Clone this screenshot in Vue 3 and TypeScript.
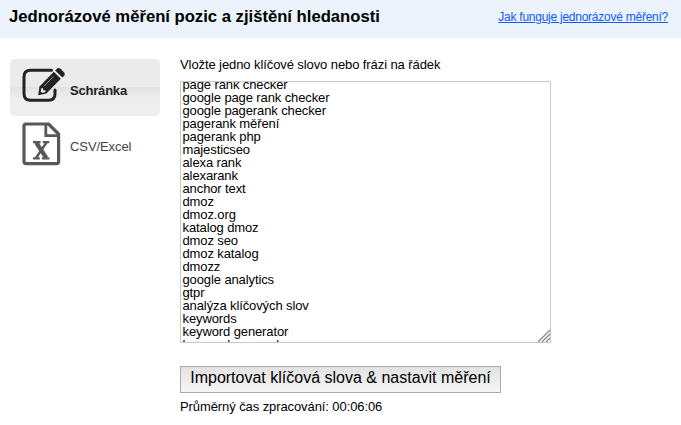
<script setup lang="ts">
const keywords: string[] = [
  'page rank checker',
  'google page rank checker',
  'google pagerank checker',
  'pagerank měření',
  'pagerank php',
  'majesticseo',
  'alexa rank',
  'alexarank',
  'anchor text',
  'dmoz',
  'dmoz.org',
  'katalog dmoz',
  'dmoz seo',
  'dmoz katalog',
  'dmozz',
  'google analytics',
  'gtpr',
  'analýza klíčových slov',
  'keywords',
  'keyword generator',
  'keyword research',
]
</script>

<template>
  <div class="page">
    <header class="header">
      <h1>Jednorázové měření pozic a zjištění hledanosti</h1>
      <a href="#">Jak funguje jednorázové měření?</a>
    </header>
    <div class="body">
      <nav class="tabs">
        <div class="tab active">
          <svg class="icon" width="47" height="40" viewBox="0 0 47 40">
            <path d="M29.5 4.2H8.5Q2 4.2 2 10.7V27.7Q2 34.2 8.5 34.2H26.5Q33 34.2 33 27.7V24" fill="none" stroke="#222" stroke-width="3" stroke-linecap="round" />
            <path d="M16.2 29.2L17.5 20.5L31.8 5.8L38.8 12.8L24.4 27.6Z" fill="#222" />
            <path d="M33.2 4.5L35.2 2.6Q36.8 1.3 38.5 2.8L42.2 6.5Q43.5 8.1 42.2 9.7L40.3 11.5Z" fill="#222" />
            <path d="M18.7 25.7L19.3 22.2L20.7 22L21.4 24.2L23.6 24.6L23.2 26.2L20.3 26.8Z" fill="#eee" />
            <path d="M22 20.2L31.5 10.4" stroke="#999" stroke-width="1" />
          </svg>
          <span>Schránka</span>
        </div>
        <div class="tab">
          <svg class="icon file" width="47" height="46" viewBox="0 0 47 46">
            <path d="M4.2 2H26.5L36.6 12V39.6Q36.6 41.6 34.6 41.6H4Q2 41.6 2 39.6V4Q2 2 4 2Z" fill="none" stroke="#585858" stroke-width="3.2" stroke-linejoin="round" />
            <path d="M23.8 2.5V13.6H36" fill="none" stroke="#585858" stroke-width="2.8" />
            <path d="M14.2 20.5L24.3 36" stroke="#585858" stroke-width="4.2" />
            <path d="M24.5 20.5L14 36" stroke="#585858" stroke-width="2.4" />
            <path d="M11 20.2H18.6M20.8 20.2H27.2M11 36.3H17.8M20 36.3H27.4" stroke="#585858" stroke-width="2.2" />
          </svg>
          <span>CSV/Excel</span>
        </div>
      </nav>
      <main class="content">
        <p class="label">Vložte jedno klíčové slovo nebo frázi na řádek</p>
        <div class="keywords">
          <div class="lines">
            <div v-for="word in keywords" :key="word">{{ word }}</div>
          </div>
          <svg class="grip" width="13" height="13" viewBox="0 0 13 13">
            <path d="M1 13L13 1M5 13L13 5M9 13L13 9" stroke="#888" stroke-width="1.3" />
          </svg>
        </div>
        <button class="submit" type="button">Importovat klíčová slova &amp; nastavit měření</button>
        <p class="time">Průměrný čas zpracování: 00:06:06</p>
      </main>
    </div>
  </div>
</template>

<style>
body {
  background: #fff;
}
</style>

<style scoped>
.page {
  height: 425px;
  overflow: hidden;
  font-family: "Liberation Sans", Arial, sans-serif;
  font-size: 13px;
  letter-spacing: -0.09px;
  color: #000;
}
.header {
  box-sizing: border-box;
  height: 38px;
  padding: 7px 13px 0 9px;
  display: flex;
  justify-content: space-between;
  background: #ecf3fc;
}
h1 {
  margin: 0;
  font-size: 16.65px;
  letter-spacing: 0;
  line-height: 19px;
  white-space: nowrap;
}
a {
  font-size: 12px;
  letter-spacing: -0.25px;
  line-height: 20px;
  color: #0b5cff;
  white-space: nowrap;
}
.body {
  display: flex;
  padding: 21px 0 0 10px;
}
.tabs {
  width: 150px;
  margin-right: 20px;
}
.tab {
  box-sizing: border-box;
  display: flex;
  height: 57px;
  padding-left: 12px;
  color: #444;
}
.active {
  border-radius: 5px;
  background: linear-gradient(#ebebeb 0, #ebebeb 28px, #e2e2e2 28px, #eee 40px, #eee 100%);
  color: #222;
  font-weight: bold;
}
.icon {
  flex: none;
  margin: 7px 1px 0 0;
}
.file {
  margin-top: 6px;
}
.tab span {
  line-height: 15px;
  margin-top: 24px;
}
.file + span {
  margin-top: 23px;
}
.active span {
  letter-spacing: -0.2px;
}
.content {
  width: 371px;
}
p {
  margin: 0;
  line-height: 15px;
  white-space: nowrap;
}
.label {
  padding-bottom: 9px;
  margin-top: -2px;
}
.keywords {
  box-sizing: border-box;
  position: relative;
  height: 262px;
  border: 1px solid #c8c8c8;
  overflow: hidden;
}
.lines {
  margin-top: -4px;
  padding-left: 1.5px;
  line-height: 13px;
  letter-spacing: -0.11px;
}
.grip {
  position: absolute;
  right: 0;
  bottom: 0;
}
.submit {
  display: block;
  box-sizing: border-box;
  width: 321px;
  height: 27px;
  margin: 23px 0 6px;
  padding: 0 0 3px;
  border: 1px solid #aaa;
  background: linear-gradient(#e2e2e2, #f6f6f6);
  font-family: inherit;
  font-size: 16px;
  letter-spacing: 0;
  color: #000;
  white-space: nowrap;
}
</style>
